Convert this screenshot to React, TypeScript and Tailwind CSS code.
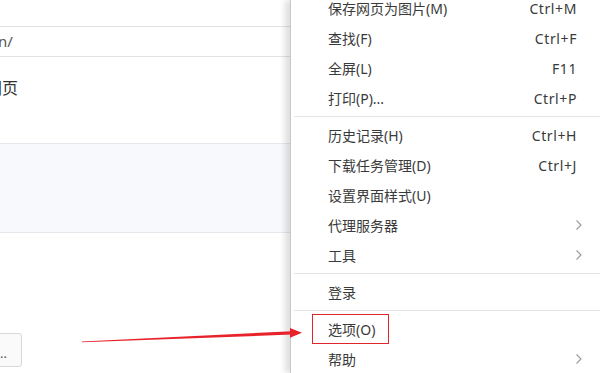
import React from 'react';

type MenuEntry =
  | { type: 'item'; label: string; shortcut?: string; sub?: boolean; boxed?: boolean }
  | { type: 'sep' };

const menu: MenuEntry[] = [
  { type: 'item', label: '保存网页为图片(M)', shortcut: 'Ctrl+M' },
  { type: 'item', label: '查找(F)', shortcut: 'Ctrl+F' },
  { type: 'item', label: '全屏(L)', shortcut: 'F11' },
  { type: 'item', label: '打印(P)...', shortcut: 'Ctrl+P' },
  { type: 'sep' },
  { type: 'item', label: '历史记录(H)', shortcut: 'Ctrl+H' },
  { type: 'item', label: '下载任务管理(D)', shortcut: 'Ctrl+J' },
  { type: 'item', label: '设置界面样式(U)' },
  { type: 'item', label: '代理服务器', sub: true },
  { type: 'item', label: '工具', sub: true },
  { type: 'sep' },
  { type: 'item', label: '登录' },
  { type: 'sep' },
  { type: 'item', label: '选项(O)', boxed: true },
  { type: 'item', label: '帮助', sub: true },
];

const Chevron = () => (
  <svg width="7" height="12" viewBox="0 0 7 12" fill="none" className="shrink-0">
    <path d="M1.5 1.5l4.5 4.5-4.5 4.5" stroke="#999" strokeWidth="1.1" />
  </svg>
);

// 左侧页面（被菜单遮住的部分）
const PagePane = () => (
  <div className="flex-1 flex flex-col overflow-hidden">
    <div className="h-[27px] border-b border-[#e2e2e2]" />
    <div className="h-[30px] border-b border-[#e2e2e2] flex items-center">
      <span className="-ml-[2px] text-[15px] text-[#555]">n/</span>
    </div>
    <div className="h-[86px] pt-[19px]">
      <span className="block -ml-[14px] text-[16px] text-[#333] whitespace-nowrap">网页</span>
    </div>
    <div className="h-[90px] bg-[#f8f9fd] border-y border-[#e6e8ee]" />
    <div className="flex-1 flex flex-col justify-end pb-[6px]">
      <div className="-ml-[10px] w-[32px] h-[34px] border border-[#d9d9d9] rounded-[3px] bg-[#fafafa] flex items-center justify-end pr-[14px] pt-[8px] text-[13px] text-[#555]">
        ..
      </div>
    </div>
  </div>
);

const Menu = () => (
  <div className="relative z-10 w-[310px] h-full bg-white border-l border-[#c9c9c9] shadow-[-5px_0_6px_rgba(0,0,0,0.13)] overflow-hidden">
    <div className="-mt-[7px] pl-[3px]">
      {menu.map((m, i) =>
        m.type === 'sep' ? (
          <div key={i} className="h-px my-[3px] bg-[#e4e4e4]" />
        ) : (
          <div key={i} className="h-[30px] flex items-center pr-[18px]">
            <div
              className={
                m.boxed
                  ? 'h-[30px] ml-[18px] pl-[15px] pr-[13px] border border-[#e0262d] flex items-center'
                  : 'ml-[34px] flex items-center'
              }
            >
              <span className="text-[14px] text-[#3a3a3a] whitespace-nowrap">{m.label}</span>
            </div>
            <div className="flex-1" />
            {m.shortcut && (
              <span className="text-[14px] text-[#3a3a3a] tracking-[0.6px] pr-[5px]">{m.shortcut}</span>
            )}
            {m.sub && <Chevron />}
          </div>
        )
      )}
    </div>
  </div>
);

export default function App() {
  return (
    <div
      className="relative w-[600px] h-[373px] overflow-hidden bg-white flex"
      style={{ fontFamily: '"Noto Sans", "Noto Sans CJK SC", sans-serif' }}
    >
      <PagePane />
      <Menu />
      {/* 红色箭头标注 */}
      <svg className="absolute left-0 top-0 z-20 pointer-events-none" width="600" height="373">
        <polygon points="82,341.5 292,331.2 292,334.6 82,342.3" fill="#e8222b" />
        <polygon points="290,328 302,332.8 290,337.8" fill="#e8222b" />
      </svg>
    </div>
  );
}
